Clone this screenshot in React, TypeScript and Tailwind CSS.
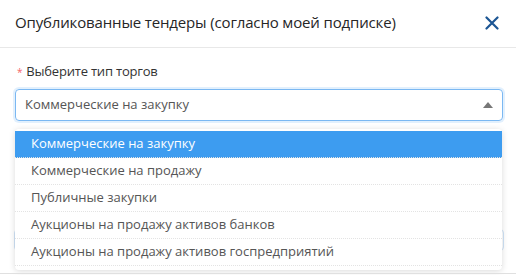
import React from "react";

const items = [
  "Коммерческие на закупку",
  "Коммерческие на продажу",
  "Публичные закупки",
  "Аукционы на продажу активов банков",
  "Аукционы на продажу активов госпредприятий",
];

export default function App() {
  return (
    <div
      className="w-[516px] h-[275px] bg-white overflow-hidden relative"
      style={{ fontFamily: '"Open Sans", "Liberation Sans", sans-serif' }}
    >
      <div className="h-[48px] flex items-center justify-between pl-[15px] pr-[17px] border-b border-[#e8e8e8]">
        <div className="text-[15px] font-medium text-[#262626] -mt-[2px] tracking-[-0.15px]">
          Опубликованные тендеры (согласно моей подписке)
        </div>
        <svg width="14" height="14" viewBox="0 0 14 14" className="-mt-[1px]">
          <path d="M1.5 1.5 L12.5 12.5 M12.5 1.5 L1.5 12.5" stroke="#1c5694" strokeWidth="2.2" strokeLinecap="round" />
        </svg>
      </div>
      <div className="px-[15px] pt-[15px]">
        <div className="flex items-center h-[18px] text-[13px] font-medium text-[#333] tracking-[-0.2px]">
          <span className="text-[#f5646a] text-[10px] mr-[4px] ml-[2px]">*</span>
          Выберите тип торгов
        </div>
        <div className="mt-[8px] h-[32px] w-[488px] rounded-[4px] border border-[#7bb8f2] shadow-[0_0_0_2px_rgba(59,156,240,0.15)] flex items-center justify-between pl-[9px] pr-[9px]">
          <span className="text-[13px] text-[#555]">Коммерческие на закупку</span>
          <svg width="10" height="6" viewBox="0 0 10 6">
            <path d="M0 6 L5 0 L10 6 Z" fill="#777" />
          </svg>
        </div>
        <div className="relative mt-[8px]">
          <div className="absolute left-[-1px] top-[100px] w-[490px] h-[22px] rounded-[4px] border border-[#cfe3f7]" />
          <div className="relative w-[487px] rounded-[4px] bg-white shadow-[0_1px_6px_rgba(0,0,0,0.15)] pt-[2px] pb-[4px]">
            {items.map((t, i) => (
              <div
                key={t}
                className={
                  "h-[27px] flex items-center pl-[16px] text-[13px] border-b border-dotted border-[#e3e3e3] " +
                  (i === 0 ? "bg-[#3d9cf0] text-white" : "text-[#555]")
                }
              >
                {t}
              </div>
            ))}
          </div>
        </div>
      </div>
      <div className="absolute left-0 right-0 bottom-[1px] h-px bg-[#e0e0e0]" />
    </div>
  );
}
